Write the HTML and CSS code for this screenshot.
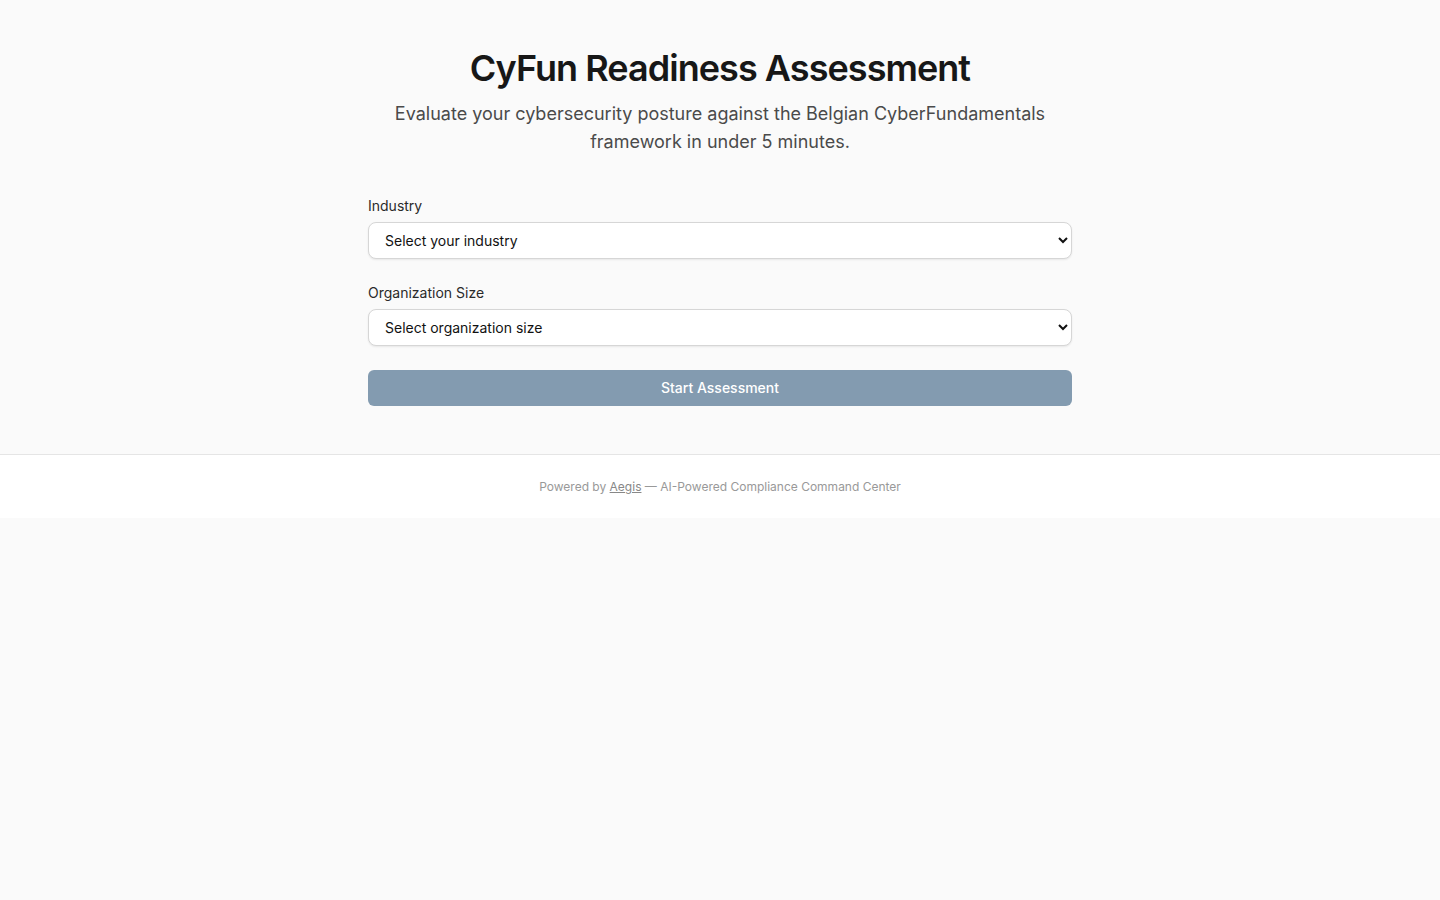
FILE: index.html
```html
<!DOCTYPE html>
<html lang="en">
<head>
<meta charset="utf-8">
<title>CyFun Readiness Assessment</title>
<link rel="stylesheet" href="styles.css">
</head>
<body>
<main class="main">
  <div class="container">
    <h1 class="title">CyFun Readiness Assessment</h1>
    <p class="subtitle">Evaluate your cybersecurity posture against the Belgian CyberFundamentals framework in under 5 minutes.</p>
    <form class="form">
      <div class="field">
        <label class="label" for="industry">Industry</label>
        <select class="select" id="industry">
          <option>Select your industry</option>
        </select>
      </div>
      <div class="field">
        <label class="label" for="size">Organization Size</label>
        <select class="select" id="size">
          <option>Select organization size</option>
        </select>
      </div>
      <button class="button" type="button" disabled>Start Assessment</button>
    </form>
  </div>
</main>
<footer class="footer">
  Powered by <a class="footer-link" href="#">Aegis</a> — AI-Powered Compliance Command Center
</footer>
</body>
</html>
```

FILE: styles.css
```css
* { box-sizing: border-box; }
html, body { margin: 0; padding: 0; }
body {
  background: #fafafa;
  font-family: Inter, "Noto Sans", sans-serif;
  color: #1a1a1a;
}
.main {
  padding: 48px 0 48px;
}
.container {
  width: 704px;
  margin: 0 auto;
}
.title {
  margin: 0;
  font-size: 36px;
  line-height: 40px;
  font-weight: 600;
  text-align: center;
  color: #171717;
  letter-spacing: -0.95px;
}
.subtitle {
  margin: 12px auto 0;
  font-size: 18px;
  line-height: 28px;
  text-align: center;
  color: #4a4a4a;
  max-width: 680px;
}
.form {
  margin-top: 40px;
  display: flex;
  flex-direction: column;
  gap: 24px;
}
.field {
  display: flex;
  flex-direction: column;
  gap: 6px;
}
.label {
  font-size: 14px;
  line-height: 20px;
  font-weight: 400;
  color: #2a2a2a;
}
.select {
  height: 37px;
  width: 100%;
  padding: 0 8px 0 12px;
  font-family: Inter, "Noto Sans", sans-serif;
  font-size: 14px;
  color: #111;
  background: #fff;
  border: 1px solid #d6d6d6;
  border-radius: 8px;
  box-shadow: 0 1px 2px rgba(0, 0, 0, 0.08);
}
.button {
  height: 36px;
  width: 100%;
  border: none;
  border-radius: 6px;
  background: #839bb0;
  color: #fff;
  font-family: Inter, "Noto Sans", sans-serif;
  font-size: 14px;
  font-weight: 500;
  line-height: 36px;
  padding: 0;
}
.footer {
  background: #fff;
  border-top: 1px solid #e5e5e5;
  padding: 24px 0 23px;
  text-align: center;
  font-size: 12px;
  line-height: 16px;
  color: #999;
}
.footer-link {
  color: #888;
  text-decoration: underline;
}
```
